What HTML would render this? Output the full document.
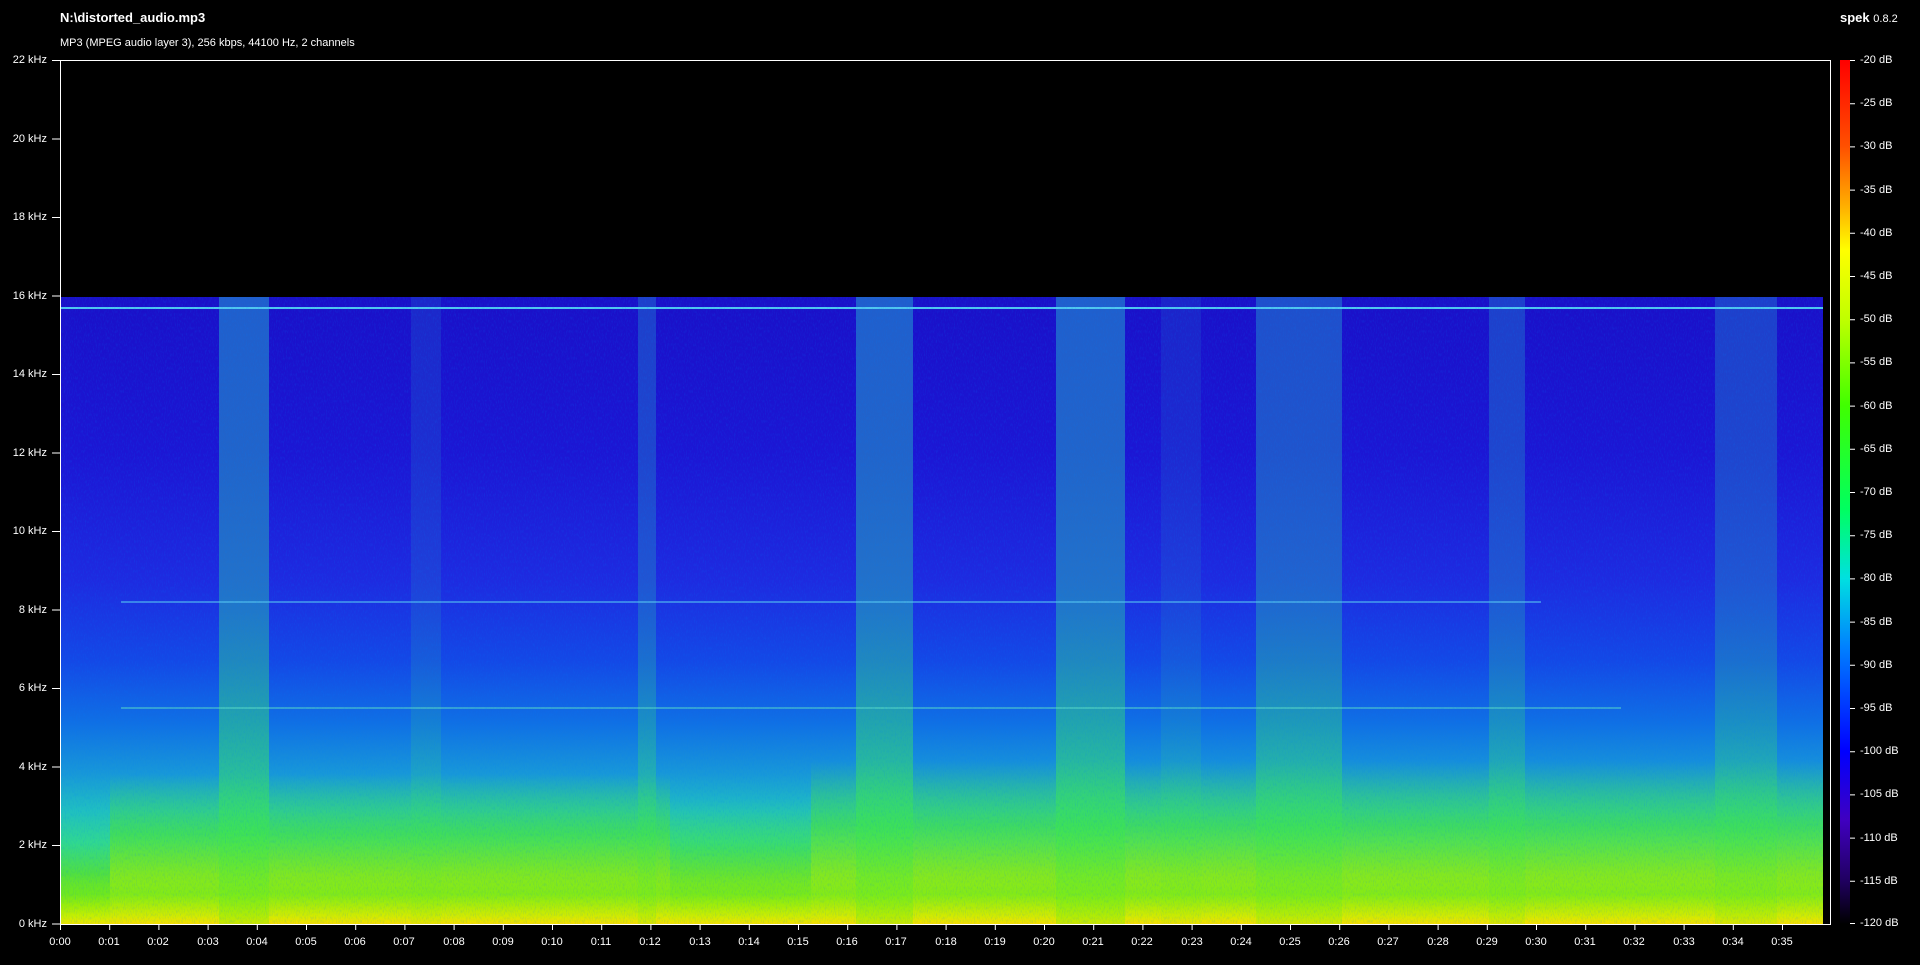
<!DOCTYPE html>
<html><head><meta charset="utf-8"><style>
body{margin:0;width:1920px;height:965px;background:#000;position:relative;overflow:hidden;font-family:"Liberation Sans",sans-serif;color:#fff}
.a{position:absolute}
.fl{position:absolute;right:1873px;font-size:11px;line-height:12px;text-align:right;white-space:nowrap}
.tl{position:absolute;top:936px;font-size:11px;width:40px;margin-left:-20px;text-align:center}
.dl{position:absolute;left:1860px;font-size:11px;line-height:12px;white-space:nowrap}
#plot{position:absolute;left:60px;top:60px;width:1769px;height:863px;border:1px solid #fff;overflow:hidden;background:#000}
#spec{position:absolute;left:0;top:236px;width:1762px;height:627px;
background:linear-gradient(to bottom,#1a10c8 0%,#1c16d4 25%,#1e2ae0 45%,#1448e6 58%,#1070e4 68%,#1898d8 76%,#20c0c0 82%,#30d890 87%,#50e040 92%,#a0f000 97%,#e0f000 100%)}
.col{position:absolute;top:0;height:100%;background:linear-gradient(to bottom,rgba(40,190,210,.45) 0%,rgba(40,200,170,.45) 50%,rgba(60,230,80,.55) 85%,rgba(140,240,0,.4) 100%)}
.low{position:absolute;bottom:0;background:linear-gradient(to bottom,rgba(60,220,120,0) 0%,rgba(80,230,40,.55) 40%,rgba(200,240,0,.65) 85%,rgba(250,220,0,.7) 100%)}
</style></head><body>
<div class="a" style="left:60px;top:10px;font-size:13px;font-weight:bold">N:\distorted_audio.mp3</div>
<div class="a" style="left:60px;top:37px;font-size:11px">MP3 (MPEG audio layer 3), 256 kbps, 44100 Hz, 2 channels</div>
<div class="a" style="left:1840px;top:10px;font-size:13px"><b>spek</b> <span style="font-size:11px">0.8.2</span></div>

<div id="plot">
<div id="spec">
<div class="low" style="left:49px;width:560px;height:24%"></div>
<div class="low" style="left:609px;width:141px;height:20%;opacity:.6"></div>
<div class="low" style="left:750px;width:1012px;height:26%"></div>
<div class="low" style="left:0;width:1762px;height:8%;opacity:.8"></div>
<div class="col" style="left:158px;width:50px"></div>
<div class="col" style="left:577px;width:18px;opacity:.6"></div>
<div class="col" style="left:795px;width:57px"></div>
<div class="col" style="left:995px;width:69px"></div>
<div class="col" style="left:1195px;width:86px;opacity:.8"></div>
<div class="col" style="left:1428px;width:36px;opacity:.6"></div>
<div class="col" style="left:1654px;width:62px;opacity:.6"></div>
<div class="col" style="left:350px;width:30px;opacity:.3"></div>
<div class="col" style="left:1100px;width:40px;opacity:.25"></div>
<div class="a" style="left:0;top:10px;width:100%;height:2px;background:#50c8f0"></div>
<div class="a" style="left:60px;top:304px;width:1420px;height:2px;background:rgba(90,200,240,.55)"></div>
<div class="a" style="left:60px;top:410px;width:1500px;height:2px;background:rgba(90,220,200,.5)"></div>
<svg class="a" style="left:0;top:0" width="1762" height="627"><filter id="n"><feTurbulence type="fractalNoise" baseFrequency="0.9 0.3" numOctaves="2" seed="3"/><feColorMatrix values="0 0 0 0 0 0 0 0 0 0.2 0 0 0 0 1 0 0 0 1.2 -0.55"/></filter><rect width="1762" height="627" filter="url(#n)" opacity=".35"/></svg>
</div>
</div>

<div class="a" style="left:1840px;top:60px;width:10px;height:864px;background:linear-gradient(to bottom,#ff0000 0%,#ff5000 10%,#ffb000 17%,#ffff00 22%,#c0ff00 30%,#40ff00 40%,#00ff60 52%,#00e0e0 60%,#0080ff 68%,#0000ff 80%,#4000c0 88%,#200060 95%,#000 100%)"></div>

<div class="fl" style="top:54px">22 kHz</div>
<div class="fl" style="top:133px">20 kHz</div>
<div class="fl" style="top:211px">18 kHz</div>
<div class="fl" style="top:290px">16 kHz</div>
<div class="fl" style="top:368px">14 kHz</div>
<div class="fl" style="top:447px">12 kHz</div>
<div class="fl" style="top:525px">10 kHz</div>
<div class="fl" style="top:604px">8 kHz</div>
<div class="fl" style="top:682px">6 kHz</div>
<div class="fl" style="top:761px">4 kHz</div>
<div class="fl" style="top:839px">2 kHz</div>
<div class="fl" style="top:918px">0 kHz</div>
<svg class="a" style="left:0;top:0" width="1920" height="965">
<g stroke="#fff" stroke-width="1">
<path d="M52 60.5h8M52 139h8M52 217.5h8M52 296h8M52 374.5h8M52 453h8M52 531.5h8M52 610h8M52 688.5h8M52 767h8M52 845.5h8M52 924h8"/>
<path d="M60.5 924v6M109.7 924v6M158.9 924v6M208.1 924v6M257.3 924v6M306.5 924v6M355.7 924v6M404.9 924v6M454.1 924v6M503.3 924v6M552.5 924v6M601.7 924v6M650.9 924v6M700.1 924v6M749.3 924v6M798.5 924v6M847.7 924v6M896.9 924v6M946.1 924v6M995.3 924v6M1044.5 924v6M1093.7 924v6M1142.9 924v6M1192.1 924v6M1241.3 924v6M1290.5 924v6M1339.7 924v6M1388.9 924v6M1438.1 924v6M1487.3 924v6M1536.5 924v6M1585.7 924v6M1634.9 924v6M1684.1 924v6M1733.3 924v6M1782.5 924v6"/>
<path d="M1850 60.5h5M1850 103.7h5M1850 146.9h5M1850 190.1h5M1850 233.3h5M1850 276.5h5M1850 319.7h5M1850 362.9h5M1850 406.1h5M1850 449.3h5M1850 492.5h5M1850 535.7h5M1850 578.9h5M1850 622.1h5M1850 665.3h5M1850 708.5h5M1850 751.7h5M1850 794.9h5M1850 838.1h5M1850 881.3h5M1850 923.5h5"/>
</g></svg>

<div class="tl" style="left:60px">0:00</div><div class="tl" style="left:109px">0:01</div><div class="tl" style="left:158px">0:02</div><div class="tl" style="left:208px">0:03</div><div class="tl" style="left:257px">0:04</div><div class="tl" style="left:306px">0:05</div><div class="tl" style="left:355px">0:06</div><div class="tl" style="left:404px">0:07</div><div class="tl" style="left:454px">0:08</div><div class="tl" style="left:503px">0:09</div><div class="tl" style="left:552px">0:10</div><div class="tl" style="left:601px">0:11</div><div class="tl" style="left:650px">0:12</div><div class="tl" style="left:700px">0:13</div><div class="tl" style="left:749px">0:14</div><div class="tl" style="left:798px">0:15</div><div class="tl" style="left:847px">0:16</div><div class="tl" style="left:896px">0:17</div><div class="tl" style="left:946px">0:18</div><div class="tl" style="left:995px">0:19</div><div class="tl" style="left:1044px">0:20</div><div class="tl" style="left:1093px">0:21</div><div class="tl" style="left:1142px">0:22</div><div class="tl" style="left:1192px">0:23</div><div class="tl" style="left:1241px">0:24</div><div class="tl" style="left:1290px">0:25</div><div class="tl" style="left:1339px">0:26</div><div class="tl" style="left:1388px">0:27</div><div class="tl" style="left:1438px">0:28</div><div class="tl" style="left:1487px">0:29</div><div class="tl" style="left:1536px">0:30</div><div class="tl" style="left:1585px">0:31</div><div class="tl" style="left:1634px">0:32</div><div class="tl" style="left:1684px">0:33</div><div class="tl" style="left:1733px">0:34</div><div class="tl" style="left:1782px">0:35</div>

<div class="dl" style="top:54px">-20 dB</div><div class="dl" style="top:97px">-25 dB</div><div class="dl" style="top:140px">-30 dB</div><div class="dl" style="top:184px">-35 dB</div><div class="dl" style="top:227px">-40 dB</div><div class="dl" style="top:270px">-45 dB</div><div class="dl" style="top:313px">-50 dB</div><div class="dl" style="top:356px">-55 dB</div><div class="dl" style="top:400px">-60 dB</div><div class="dl" style="top:443px">-65 dB</div><div class="dl" style="top:486px">-70 dB</div><div class="dl" style="top:529px">-75 dB</div><div class="dl" style="top:572px">-80 dB</div><div class="dl" style="top:616px">-85 dB</div><div class="dl" style="top:659px">-90 dB</div><div class="dl" style="top:702px">-95 dB</div><div class="dl" style="top:745px">-100 dB</div><div class="dl" style="top:788px">-105 dB</div><div class="dl" style="top:832px">-110 dB</div><div class="dl" style="top:875px">-115 dB</div><div class="dl" style="top:917px">-120 dB</div>
</body></html>
